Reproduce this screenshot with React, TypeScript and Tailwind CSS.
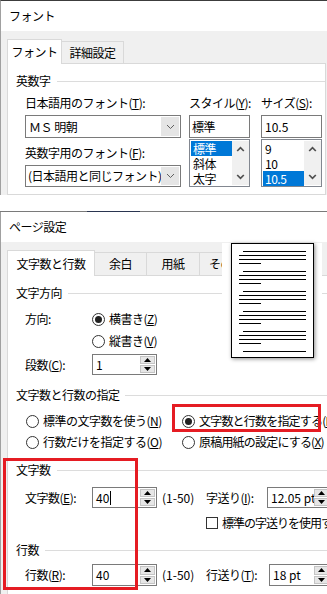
import React from "react";

const U = ({ c }: { c: string }) => <span className="underline underline-offset-[1px]">{c}</span>;

function Radio({ on }: { on?: boolean }) {
  return (
    <span className="w-[13px] h-[13px] rounded-full border border-[#333333] bg-white flex items-center justify-center shrink-0">
      {on && <span className="w-[7px] h-[7px] rounded-full bg-[#222222]" />}
    </span>
  );
}

function Chevron() {
  return (
    <svg width="9" height="6" viewBox="0 0 9 6">
      <path d="M1 1 L4.5 4.5 L8 1" fill="none" stroke="#606060" strokeWidth="1" />
    </svg>
  );
}

function Combo({ children }: { children: React.ReactNode }) {
  return (
    <div className="flex h-full border border-[#7a7a7a] bg-white">
      <div className="flex-1 min-w-0 flex items-center pl-[2px] whitespace-nowrap">{children}</div>
      <div className="w-[18px] shrink-0 my-px mr-px bg-[#e5e5e5] flex items-center justify-center">
        <Chevron />
      </div>
    </div>
  );
}

function ScrollChevron({ up }: { up?: boolean }) {
  return (
    <svg width="9" height="6" viewBox="0 0 9 6">
      <path d={up ? "M1.2 5 L4.5 1.6 L7.8 5" : "M1.2 1 L4.5 4.4 L7.8 1"} fill="none" stroke="#505050" strokeWidth="1.7" />
    </svg>
  );
}

function ListBox({ items, sel }: { items: string[]; sel: number }) {
  return (
    <div className="h-[48px] mt-px border border-[#828790] bg-white flex pl-px py-px">
      <div className="flex-1 flex flex-col">
        {items.map((t, i) => (
          <div
            key={t}
            className={"h-[15px] leading-[15px] pl-[2px] " + (i === sel ? "bg-[#0078d7] text-white" : "")}
          >
            {t}
          </div>
        ))}
      </div>
      <div className="w-[17px] shrink-0 bg-[#f0f0f0] flex flex-col justify-between items-center py-[5px]">
        <ScrollChevron up />
        <ScrollChevron />
      </div>
    </div>
  );
}

function Tri({ up }: { up?: boolean }) {
  return (
    <svg width="7" height="4" viewBox="0 0 7 4">
      <path d={up ? "M0 4 L3.5 0 L7 4Z" : "M0 0 L3.5 4 L7 0Z"} fill="#000" />
    </svg>
  );
}

function Spin({ value, w, h, cursor }: { value: string; w: number; h: number; cursor?: boolean }) {
  return (
    <div className="flex border border-[#7a7a7a] bg-white shrink-0" style={{ width: w, height: h }}>
      <div className="flex-1 min-w-0 flex items-center pl-[3px] overflow-hidden whitespace-nowrap tracking-normal">
        {value}
        {cursor && <span className="inline-block w-px h-[14px] bg-black ml-px" />}
      </div>
      <div className="w-[15px] shrink-0 flex flex-col gap-px py-px mr-px">
        <div className="flex-1 bg-[#e6e6e6] border border-[#c4c4c4] flex items-center justify-center">
          <Tri up />
        </div>
        <div className="flex-1 bg-[#e6e6e6] border border-[#c4c4c4] flex items-center justify-center">
          <Tri />
        </div>
      </div>
    </div>
  );
}

function Group({ label, ml = 6 }: { label: string; ml?: number }) {
  return (
    <div className="flex items-center h-[16px] pl-[8px]">
      <span className="whitespace-nowrap shrink-0">{label}</span>
      <div className="flex-1 h-px bg-[#dcdcdc]" style={{ marginLeft: ml }} />
    </div>
  );
}

export default function App() {
  return (
    <div className="relative w-[327px] h-[594px] overflow-hidden bg-white text-black text-[12px] leading-none tracking-[-0.5px] font-['Noto_Sans_CJK_JP','Noto_Sans',sans-serif]">
      {/* Font dialog */}
      <div className="h-[195px] flex flex-col border-t border-t-[#3c3c3c] border-l border-l-[#a0a0a0] overflow-hidden">
        <div className="h-[30px] shrink-0 bg-white flex items-center pl-[8px]">フォント</div>
        <div className="flex-1 bg-[#f0f0f0] pl-[6px] pt-[8px] flex flex-col">
          <div className="flex items-end h-[24px] shrink-0">
            <div className="relative z-10 -mb-px h-[25px] w-[55px] shrink-0 bg-white border border-b-0 border-[#d9d9d9] flex items-center justify-center">
              フォント
            </div>
            <div className="h-[22px] w-[62px] shrink-0 bg-[#f0f0f0] border-t border-r border-[#d9d9d9] flex items-center justify-center">
              詳細設定
            </div>
          </div>
          <div className="w-[319px] flex-1 bg-white border border-[#d9d9d9] pt-[9px]">
            <Group label="英数字" />
            <div className="flex mt-[5px] pl-[17px]">
              <div className="w-[156px] shrink-0 flex flex-col">
                <div className="h-[18px] flex items-center whitespace-nowrap">
                  日本語用のフォント(<U c="T" />):
                </div>
                <div className="h-[23px] mt-[3px]">
                  <Combo>
                    <span className="ml-px">ＭＳ 明朝</span>
                  </Combo>
                </div>
                <div className="h-[21px] mt-[4px] flex items-center whitespace-nowrap">
                  英数字用のフォント(<U c="F" />):
                </div>
                <div className="h-[22px] mt-[2px]">
                  <Combo>
                    (日本語用と同じフォント)
                    <span className="inline-block w-px h-[14px] bg-black ml-[2px]" />
                  </Combo>
                </div>
              </div>
              <div className="w-[61px] shrink-0 ml-[8px] flex flex-col">
                <div className="h-[18px] flex items-center whitespace-nowrap">
                  スタイル(<U c="Y" />):
                </div>
                <div className="h-[23px] mt-[3px] border border-[#7a7a7a] bg-white flex items-center pl-[2px]">
                  標準
                </div>
                <ListBox items={["標準", "斜体", "太字"]} sel={0} />
              </div>
              <div className="w-[61px] shrink-0 ml-[11px] flex flex-col">
                <div className="h-[18px] flex items-center whitespace-nowrap">
                  サイズ(<U c="S" />):
                </div>
                <div className="h-[23px] mt-[3px] border border-[#7a7a7a] bg-white flex items-center pl-[3px] tracking-normal">
                  10.5
                </div>
                <ListBox items={["9", "10", "10.5"]} sel={2} />
              </div>
            </div>
          </div>
        </div>
      </div>

      <div className="h-[16px] bg-white" />

      {/* Page setup dialog */}
      <div className="flex h-px">
        <div className="w-[87px] bg-[#7a7a7a]" />
        <div className="w-[53px] bg-[#2a3550]" />
        <div className="flex-1 bg-[#7a7a7a]" />
      </div>
      <div className="flex flex-col border-l border-l-[#a0a0a0] h-[382px]">
        <div className="h-[30px] shrink-0 bg-white flex items-center pl-[8px]">ページ設定</div>
        <div className="flex-1 bg-[#f0f0f0] pl-[6px] pt-[8px] flex flex-col">
          <div className="flex items-end h-[25px] shrink-0">
            <div className="relative z-10 -mb-px h-[26px] w-[88px] shrink-0 bg-white border border-b-0 border-[#d9d9d9] flex items-center justify-center">
              文字数と行数
            </div>
            <div className="h-[23px] w-[52px] shrink-0 bg-[#f0f0f0] border-t border-r border-[#d9d9d9] flex items-center justify-center">
              余白
            </div>
            <div className="h-[23px] w-[53px] shrink-0 bg-[#f0f0f0] border-t border-r border-[#d9d9d9] flex items-center justify-center">
              用紙
            </div>
            <div className="h-[23px] w-[60px] shrink-0 bg-[#f0f0f0] border-t border-r border-[#d9d9d9] flex items-center pl-[9px] whitespace-nowrap">
              その他
            </div>
          </div>
          <div className="flex-1 bg-white border-t border-l border-[#d9d9d9] pt-[9px] whitespace-nowrap">
            <Group label="文字方向" />
            <div className="flex items-center h-[20px] mt-[8px] pl-[17px]">
              <span className="w-[67px] shrink-0">方向:</span>
              <Radio on />
              <span className="ml-[4px]">
                横書き(<U c="Z" />)
              </span>
            </div>
            <div className="flex items-center h-[20px] mt-[2px] pl-[84px]">
              <Radio />
              <span className="ml-[4px]">
                縦書き(<U c="V" />)
              </span>
            </div>
            <div className="flex items-center h-[21px] mt-[3px] pl-[17px]">
              <span className="w-[67px] shrink-0">
                段数(<U c="C" />):
              </span>
              <Spin value="1" w={65} h={21} />
            </div>

            <div className="mt-[12px]">
              <Group label="文字数と行数の指定" ml={5} />
            </div>
            <div className="flex items-center h-[20px] mt-[8px] pl-[18px]">
              <div className="w-[156px] shrink-0 flex items-center">
                <Radio />
                <span className="ml-[4px]">
                  標準の文字数を使う(<U c="N" />)
                </span>
              </div>
              <Radio on />
              <span className="ml-[4px] shrink-0 tracking-[-0.8px]">
                文字数と行数を指定する(<U c="H" />)
              </span>
            </div>
            <div className="flex items-center h-[20px] mt-px pl-[18px]">
              <div className="w-[156px] shrink-0 flex items-center">
                <Radio />
                <span className="ml-[4px]">
                  行数だけを指定する(<U c="O" />)
                </span>
              </div>
              <Radio />
              <span className="ml-[4px] shrink-0 tracking-[-0.8px]">
                原稿用紙の設定にする(<U c="X" />)
              </span>
            </div>

            <div className="mt-[10px]">
              <Group label="文字数" />
            </div>
            <div className="flex items-center h-[21px] mt-[9px] pl-[17px]">
              <span className="w-[67px] shrink-0">
                文字数(<U c="E" />):
              </span>
              <Spin value="40" w={65} h={21} cursor />
              <span className="w-[49px] shrink-0 pl-[5px] tracking-normal">(1-50)</span>
              <span className="w-[61px] shrink-0">
                字送り(<U c="I" />):
              </span>
              <Spin value="12.05 pt" w={64} h={21} />
            </div>
            <div className="flex items-center h-[21px] mt-[4px] pl-[198px]">
              <span className="w-[12px] h-[12px] border border-[#333333] bg-white shrink-0" />
              <span className="ml-[4px] shrink-0 tracking-[-1px]">標準の字送りを使用する(<U c="A" />)</span>
            </div>

            <div className="mt-[9px]">
              <Group label="行数" />
            </div>
            <div className="flex items-center h-[22px] mt-[6px] pl-[17px]">
              <span className="w-[67px] shrink-0">
                行数(<U c="R" />):
              </span>
              <Spin value="40" w={65} h={22} />
              <span className="w-[49px] shrink-0 pl-[5px] tracking-normal">(1-50)</span>
              <span className="w-[63px] shrink-0">
                行送り(<U c="T" />):
              </span>
              <Spin value="18 pt" w={62} h={22} />
            </div>
          </div>
        </div>
      </div>

      {/* Preview overlay */}
      <div className="absolute left-[222px] top-[243px] w-[100px] h-[122px] bg-white" />
      <div className="absolute left-[231px] top-[243px] shadow-[1px_1px_4px_rgba(0,0,0,0.45)]">
        <svg width="83" height="115" viewBox="0 0 83 115" className="block">
          <rect x="0.5" y="0.5" width="82" height="114" fill="white" stroke="black" />
          {[8, 28, 48, 68, 88].map((y) => (
            <g key={y}>
              <rect x="12" y={y} width="63" height="1" fill="black" />
              <rect x="8" y={y + 4} width="67" height="1" fill="black" />
              <rect x="8" y={y + 8} width="67" height="1" fill="black" />
              <rect x="8" y={y + 12} width="22" height="1" fill="black" />
            </g>
          ))}
          <rect x="12" y="108" width="63" height="1" fill="black" />
        </svg>
      </div>

      {/* Red highlight boxes */}
      <div className="absolute left-[172px] top-[404px] w-[149px] h-[28px] border-[3px] border-[#e51c23]" />
      <div className="absolute left-[3px] top-[458px] w-[135px] h-[132px] border-[3px] border-[#e51c23]" />
    </div>
  );
}
